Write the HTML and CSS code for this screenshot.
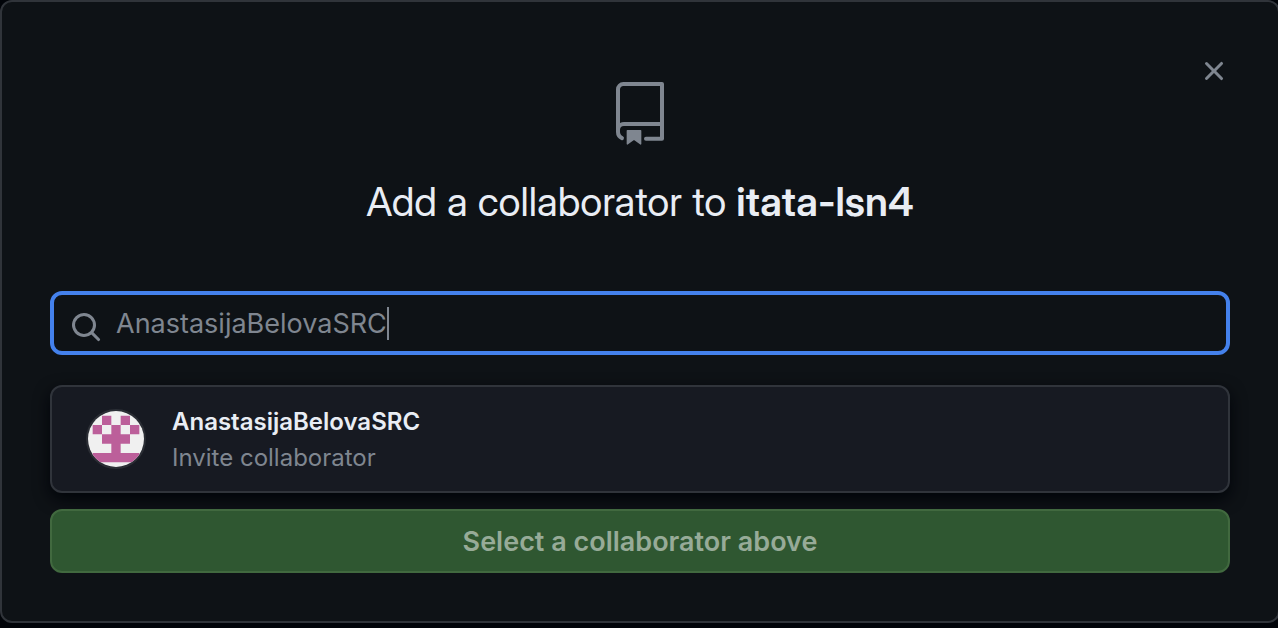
FILE: index.html
```html
<!DOCTYPE html>
<html lang="en">
<head>
<meta charset="utf-8">
<title>Add a collaborator</title>
<link rel="stylesheet" href="styles.css">
</head>
<body>
<main class="dialog" role="dialog" aria-labelledby="dialog-title">
  <button class="close" type="button" aria-label="Close">
    <svg viewBox="0 0 16 16" width="32" height="32" fill="currentColor" aria-hidden="true"><path d="M3.72 3.72a.75.75 0 0 1 1.06 0L8 6.94l3.22-3.22a.75.75 0 1 1 1.06 1.06L9.06 8l3.22 3.22a.75.75 0 1 1-1.06 1.06L8 9.06l-3.22 3.22a.75.75 0 0 1-1.06-1.06L6.94 8 3.72 4.78a.75.75 0 0 1 0-1.06z"/></svg>
  </button>
  <header class="header">
    <svg class="repo-icon" viewBox="0 0 24 24" width="64" height="64" fill="currentColor" aria-hidden="true"><path fill-rule="evenodd" d="M3 2.75A2.75 2.75 0 0 1 5.75 0h14.5a.75.75 0 0 1 .75.75v20.5a.75.75 0 0 1-.75.75h-6a.75.75 0 0 1 0-1.5h5.25v-4H6A1.5 1.5 0 0 0 4.5 18v.75c0 .716.43 1.334 1.05 1.605a.75.75 0 0 1-.6 1.374A3.25 3.25 0 0 1 3 18.75v-16zM19.5 1.5V15H6c-.546 0-1.059.146-1.5.401V2.75c0-.69.56-1.25 1.25-1.25H19.5z"/><path d="M7 18.25a.25.25 0 0 1 .25-.25h5a.25.25 0 0 1 .25.25v5.01a.25.25 0 0 1-.397.201l-2.206-1.604a.25.25 0 0 0-.294 0L7.397 23.46a.25.25 0 0 1-.397-.2v-5.01z"/></svg>
    <h1 class="title" id="dialog-title">Add a collaborator to <strong>itata-lsn4</strong></h1>
  </header>
  <form class="form">
    <label class="search">
      <svg class="search-icon" viewBox="0 0 16 16" width="32" height="32" fill="currentColor" aria-hidden="true"><path fill-rule="evenodd" d="M11.5 7a4.499 4.499 0 1 1-8.998 0A4.499 4.499 0 0 1 11.5 7zm-.82 4.74a6 6 0 1 1 1.06-1.06l3.04 3.04a.75.75 0 1 1-1.06 1.06l-3.04-3.04z"/></svg>
      <input class="search-input" type="text" value="AnastasijaBelovaSRC" aria-label="Search for a collaborator" autocomplete="off" spellcheck="false">
      <span class="caret"></span>
    </label>
    <button class="result" type="button">
      <svg class="avatar" viewBox="0 0 12 12" width="60" height="60" aria-hidden="true"><rect width="12" height="12" fill="#f0f0f0"/><path fill="#bc5f9a" d="M3 1h2v2H3zM7 1h2v2H7zM1 3h2v2H1zM5 3h2v2H5zM9 3h2v2H9zM3 5h6v2H3zM5 7h2v2H5zM1 9h10v2H1z"/></svg>
      <span class="person">
        <span class="name">AnastasijaBelovaSRC</span>
        <span class="hint">Invite collaborator</span>
      </span>
    </button>
    <button class="submit" type="submit" disabled>Select a collaborator above</button>
  </form>
</main>
</body>
</html>
```

FILE: styles.css
```css
* {
  box-sizing: border-box;
}

body {
  margin: 0;
  overflow: hidden;
  background: #010409;
  color: #e9edf4;
  font-family: Inter, "Liberation Sans", sans-serif;
}

button,
input {
  font: inherit;
}

svg {
  display: block;
  flex: none;
}

.dialog {
  position: relative;
  margin-right: -2px;
  padding: 80px 48px 48px;
  border: 2px solid #30343a;
  border-radius: 12px;
  background: #0e1216;
}

.close {
  position: absolute;
  top: 53px;
  right: 48px;
  padding: 0;
  border: 0;
  background: none;
  color: #7f8690;
}

.header {
  display: flex;
  flex-direction: column;
  align-items: center;
  gap: 26px;
}

.repo-icon {
  color: #7f8690;
}

.title {
  margin: 0;
  font-family: "Inter Display", Inter, "Liberation Sans", sans-serif;
  font-size: 40px;
  line-height: 60px;
  font-weight: 400;
}

.title strong {
  font-weight: 600;
}

.form {
  display: flex;
  flex-direction: column;
  margin-top: 59px;
}

.search {
  display: flex;
  align-items: center;
  height: 64px;
  padding: 0 16px;
  border: 4px solid #4481ec;
  border-radius: 12px;
  color: #7f8690;
}

.search-icon {
  margin: 8px 14px 0 0;
}

.search-input {
  field-sizing: content;
  min-width: 0;
  padding: 2px 0 0;
  border: 0;
  outline: 0;
  background: none;
  color: #7f8690;
  font-size: 27px;
  line-height: 40px;
}

.caret {
  width: 2px;
  height: 33px;
  background: #7f8690;
}

.result {
  display: flex;
  align-items: center;
  gap: 26px;
  height: 108px;
  margin: 30px 0 16px;
  padding: 0 34px;
  border: 2px solid #30343b;
  border-radius: 12px;
  background: #171a22;
  box-shadow: 0 6px 16px #010409;
  text-align: left;
}

.avatar {
  border: 2px solid #2b2e35;
  border-radius: 50%;
}

.person {
  display: flex;
  flex-direction: column;
  padding-top: 2px;
  font-size: 24px;
  line-height: 36px;
}

.name {
  color: #e9edf4;
  font-weight: 600;
}

.hint {
  color: #7f8690;
}

.submit {
  height: 64px;
  border: 2px solid #41693f;
  border-radius: 12px;
  background: #2f5731;
  color: #97ab98;
  font-size: 27px;
  font-weight: 600;
}
```
